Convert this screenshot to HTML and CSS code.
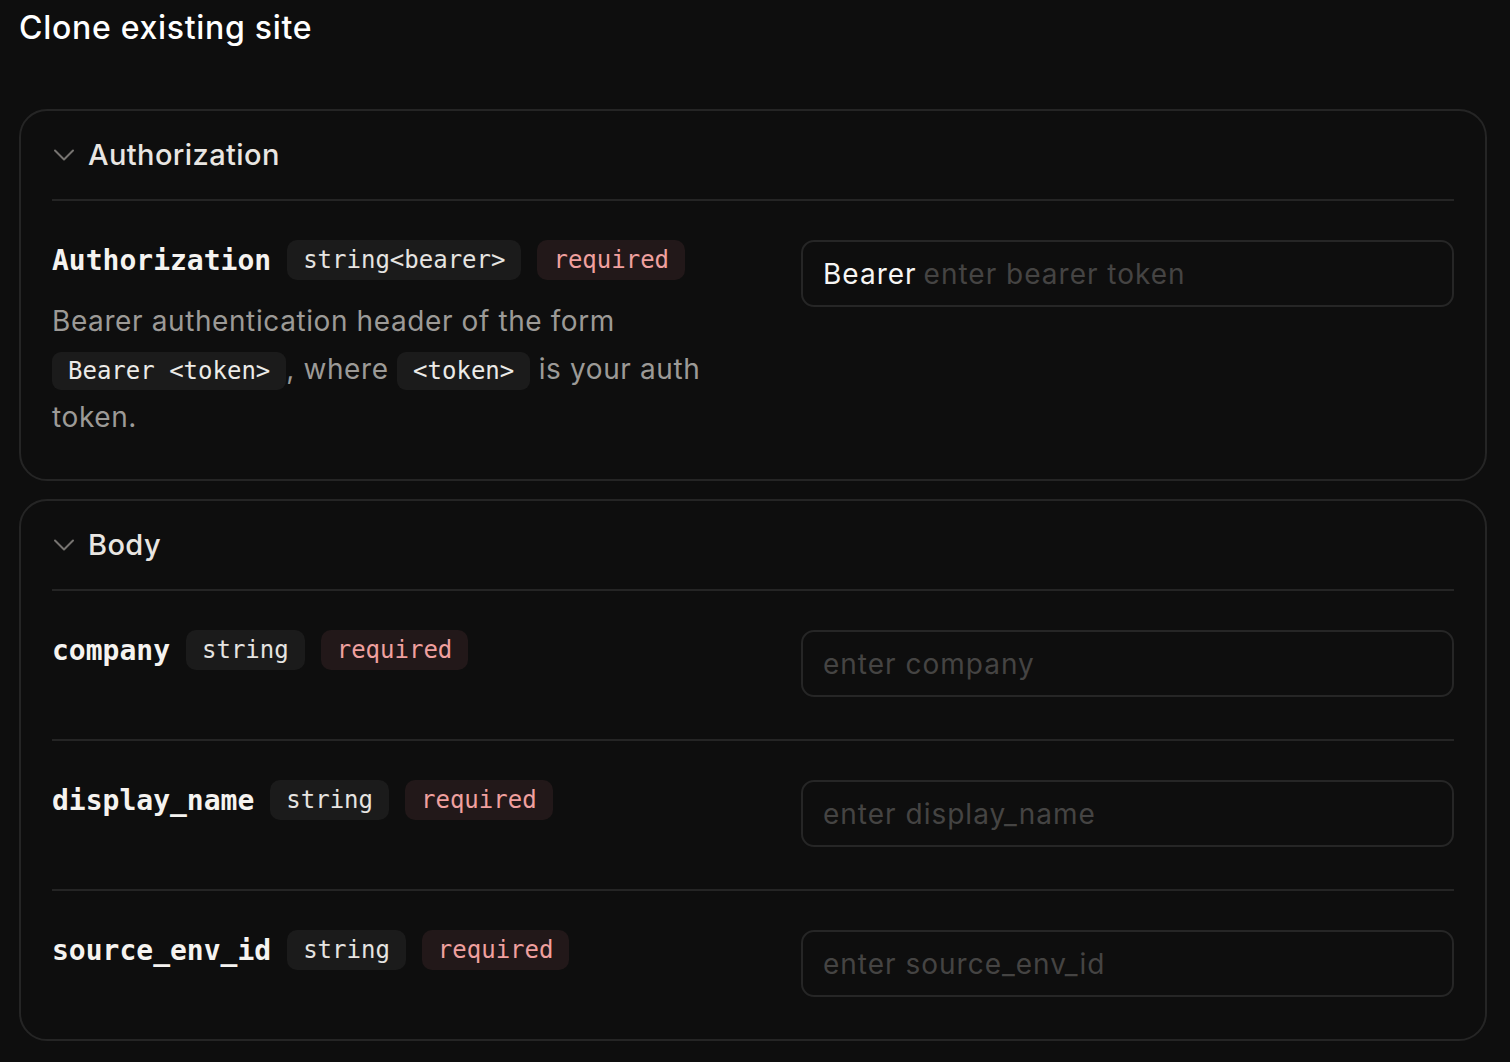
FILE: index.html
```html
<!DOCTYPE html>
<html lang="en">
<head>
    <meta charset="UTF-8">
    <meta name="viewport" content="width=device-width, initial-scale=1.0">
    <title>Clone existing site</title>
    <link rel="stylesheet" href="styles.css">
</head>
<body>
    <main class="page">
        <h1 class="page-title">Clone existing site</h1>

        <section class="panel">
            <header class="panel-head">
                <svg class="chevron" viewBox="0 0 24 24" width="24" height="24"><path d="M3 7.5l9 9 9-9"/></svg>
                <span>Authorization</span>
            </header>
            <div class="field">
                <div class="field-info">
                    <div class="field-meta">
                        <span class="field-name">Authorization</span>
                        <span class="badge">string&lt;bearer&gt;</span>
                        <span class="badge badge-required">required</span>
                    </div>
                    <p class="field-desc">Bearer authentication header of the form <code>Bearer &lt;token&gt;</code>, where <code>&lt;token&gt;</code> is your auth token.</p>
                </div>
                <label class="input">
                    <span class="input-prefix">Bearer</span>
                    <input type="text" placeholder="enter bearer token">
                </label>
            </div>
        </section>

        <section class="panel">
            <header class="panel-head">
                <svg class="chevron" viewBox="0 0 24 24" width="24" height="24"><path d="M3 7.5l9 9 9-9"/></svg>
                <span>Body</span>
            </header>
            <div class="field">
                <div class="field-info">
                    <div class="field-meta">
                        <span class="field-name">company</span>
                        <span class="badge">string</span>
                        <span class="badge badge-required">required</span>
                    </div>
                </div>
                <label class="input">
                    <input type="text" placeholder="enter company">
                </label>
            </div>
            <div class="field">
                <div class="field-info">
                    <div class="field-meta">
                        <span class="field-name">display_name</span>
                        <span class="badge">string</span>
                        <span class="badge badge-required">required</span>
                    </div>
                </div>
                <label class="input">
                    <input type="text" placeholder="enter display_name">
                </label>
            </div>
            <div class="field">
                <div class="field-info">
                    <div class="field-meta">
                        <span class="field-name">source_env_id</span>
                        <span class="badge">string</span>
                        <span class="badge badge-required">required</span>
                    </div>
                </div>
                <label class="input">
                    <input type="text" placeholder="enter source_env_id">
                </label>
            </div>
        </section>
    </main>
</body>
</html>
```

FILE: styles.css
```css
body {
    margin: 0;
    background-color: #0e0e0e;
    color: #f2f0ee;
    font-family: 'Inter', sans-serif;
}

.page {
    padding: 10px 23px 20px 19px;
    display: flex;
    flex-direction: column;
    gap: 18px;
}

.page-title {
    margin: 0 0 45px 0;
    font-size: 32px;
    line-height: 36px;
    font-weight: 500;
    letter-spacing: 0.7px;
    color: #ffffff;
}

.panel {
    border: 2px solid #252525;
    border-radius: 28px;
    padding: 0 31px;
}

.panel-head {
    display: flex;
    align-items: center;
    gap: 12px;
    padding: 27px 0;
    border-bottom: 2px solid #252525;
    font-size: 29px;
    line-height: 34px;
    font-weight: 500;
    letter-spacing: 0.4px;
    color: #e9e6e2;
}

.chevron {
    fill: none;
    stroke: #767370;
    stroke-width: 2;
    stroke-linecap: round;
    stroke-linejoin: round;
}

.field {
    display: grid;
    grid-template-columns: 1fr 1fr;
    gap: 96px;
    align-items: start;
    padding: 39px 0 42px 0;
    border-bottom: 2px solid #252525;
}

.field:last-child {
    border-bottom: none;
}

.field-meta {
    display: flex;
    align-items: center;
    gap: 16px;
    height: 40px;
}

.field-name {
    font-family: 'DejaVu Sans Mono', monospace;
    font-size: 28px;
    font-weight: bold;
    color: #f5f3f0;
}

.badge {
    display: inline-flex;
    align-items: center;
    height: 40px;
    padding: 0 16px;
    border-radius: 10px;
    background-color: #1b1b1b;
    font-family: 'DejaVu Sans Mono', monospace;
    font-size: 24px;
    color: #e6e4e1;
}

.badge-required {
    background-color: #221819;
    color: #f0a09f;
}

.field-desc {
    margin: 17px 0 -4px 0;
    font-size: 28px;
    line-height: 48px;
    letter-spacing: 0.6px;
    color: #9c9a97;
}

.field-desc code {
    display: inline-block;
    line-height: 38px;
    padding: 0 16px;
    border-radius: 9px;
    background-color: #1b1b1b;
    font-family: 'DejaVu Sans Mono', monospace;
    font-size: 24px;
    letter-spacing: 0;
    color: #ecebe8;
}

.input {
    display: flex;
    align-items: center;
    gap: 7px;
    height: 63px;
    padding: 0 20px;
    border: 2px solid #262626;
    border-radius: 13px;
    font-size: 28px;
    letter-spacing: 1px;
}

.input-prefix {
    color: #f7f6f4;
}

.input input {
    flex: 1;
    min-width: 0;
    padding: 0;
    border: none;
    outline: none;
    background: transparent;
    font-family: 'Inter', sans-serif;
    font-size: 28px;
    letter-spacing: 1px;
    color: #f7f6f4;
}

.input input::placeholder {
    color: #454443;
}
```
